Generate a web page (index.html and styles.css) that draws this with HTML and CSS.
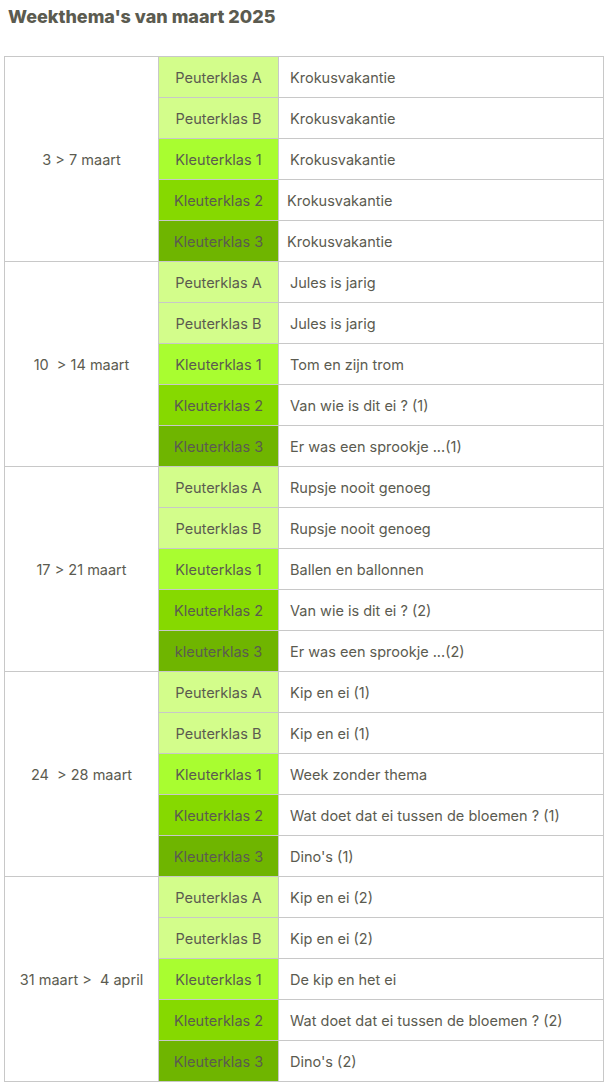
FILE: index.html
```html
<!DOCTYPE html>
<html>
<head>
  <meta charset="UTF-8">
  <meta name="viewport" content="width=device-width, initial-scale=1.0">
  <title>Weekthema's van maart 2025</title>
  <link rel="stylesheet" href="styles.css">
</head>
<body>
  <h2 class="title">Weekthema's van maart 2025</h2>

  <table class="themes">
    <tbody>
      <tr>
        <td class="week" rowspan="5">3 &gt; 7 maart</td>
        <td class="klas pa">Peuterklas A</td>
        <td class="thema">Krokusvakantie</td>
      </tr>
      <tr>
        <td class="klas pb">Peuterklas B</td>
        <td class="thema">Krokusvakantie</td>
      </tr>
      <tr>
        <td class="klas k1">Kleuterklas 1</td>
        <td class="thema">Krokusvakantie</td>
      </tr>
      <tr>
        <td class="klas k2">Kleuterklas 2</td>
        <td class="thema tight">Krokusvakantie</td>
      </tr>
      <tr>
        <td class="klas k3">Kleuterklas 3</td>
        <td class="thema tight">Krokusvakantie</td>
      </tr>

      <tr>
        <td class="week" rowspan="5">10&nbsp; &gt; 14 maart</td>
        <td class="klas pa">Peuterklas A</td>
        <td class="thema">Jules is jarig</td>
      </tr>
      <tr>
        <td class="klas pb">Peuterklas B</td>
        <td class="thema">Jules is jarig</td>
      </tr>
      <tr>
        <td class="klas k1">Kleuterklas 1</td>
        <td class="thema">Tom en zijn trom</td>
      </tr>
      <tr>
        <td class="klas k2">Kleuterklas 2</td>
        <td class="thema">Van wie is dit ei ? (1)</td>
      </tr>
      <tr>
        <td class="klas k3">Kleuterklas 3</td>
        <td class="thema">Er was een sprookje ...(1)</td>
      </tr>

      <tr>
        <td class="week" rowspan="5">17 &gt; 21 maart</td>
        <td class="klas pa">Peuterklas A</td>
        <td class="thema">Rupsje nooit genoeg</td>
      </tr>
      <tr>
        <td class="klas pb">Peuterklas B</td>
        <td class="thema">Rupsje nooit genoeg</td>
      </tr>
      <tr>
        <td class="klas k1">Kleuterklas 1</td>
        <td class="thema">Ballen en ballonnen</td>
      </tr>
      <tr>
        <td class="klas k2">Kleuterklas 2</td>
        <td class="thema">Van wie is dit ei ? (2)</td>
      </tr>
      <tr>
        <td class="klas k3">kleuterklas 3</td>
        <td class="thema">Er was een sprookje ...(2)</td>
      </tr>

      <tr>
        <td class="week" rowspan="5">24&nbsp; &gt; 28 maart</td>
        <td class="klas pa">Peuterklas A</td>
        <td class="thema">Kip en ei (1)</td>
      </tr>
      <tr>
        <td class="klas pb">Peuterklas B</td>
        <td class="thema">Kip en ei (1)</td>
      </tr>
      <tr>
        <td class="klas k1">Kleuterklas 1</td>
        <td class="thema">Week zonder thema</td>
      </tr>
      <tr>
        <td class="klas k2">Kleuterklas 2</td>
        <td class="thema">Wat doet dat ei tussen de bloemen ? (1)</td>
      </tr>
      <tr>
        <td class="klas k3">Kleuterklas 3</td>
        <td class="thema">Dino's (1)</td>
      </tr>

      <tr>
        <td class="week" rowspan="5">31 maart &gt;&nbsp; 4 april</td>
        <td class="klas pa">Peuterklas A</td>
        <td class="thema">Kip en ei (2)</td>
      </tr>
      <tr>
        <td class="klas pb">Peuterklas B</td>
        <td class="thema">Kip en ei (2)</td>
      </tr>
      <tr>
        <td class="klas k1">Kleuterklas 1</td>
        <td class="thema">De kip en het ei</td>
      </tr>
      <tr>
        <td class="klas k2">Kleuterklas 2</td>
        <td class="thema">Wat doet dat ei tussen de bloemen ? (2)</td>
      </tr>
      <tr>
        <td class="klas k3">Kleuterklas 3</td>
        <td class="thema">Dino's (2)</td>
      </tr>
    </tbody>
  </table>
</body>
</html>
```

FILE: styles.css
```css
body {
  margin: 0;
  padding: 0 4px;
  font-family: Inter, "Noto Sans", sans-serif;
  color: #5b5b50;
  background: #fff;
}
.title {
  margin: 0;
  padding: 6px 4px 0;
  height: 56px;
  box-sizing: border-box;
  font-size: 18px;
  font-weight: 800;
  color: #5b5b50;
}
.themes {
  border-collapse: collapse;
  width: 600px;
  font-size: 14.5px;
}
.themes td {
  border: 1px solid #c8c8c8;
  height: 40px;
  padding: 0;
}
.week {
  width: 153px;
  text-align: center;
}
.klas {
  width: 119px;
  text-align: center;
}
.thema {
  padding-left: 11px !important;
}
.thema.tight {
  padding-left: 8px !important;
}
.pa, .pb { background: #d3fd8b; }
.k1 { background: #a9fd30; }
.k2 { background: #86d900; }
.k3 { background: #6fb500; }
```
